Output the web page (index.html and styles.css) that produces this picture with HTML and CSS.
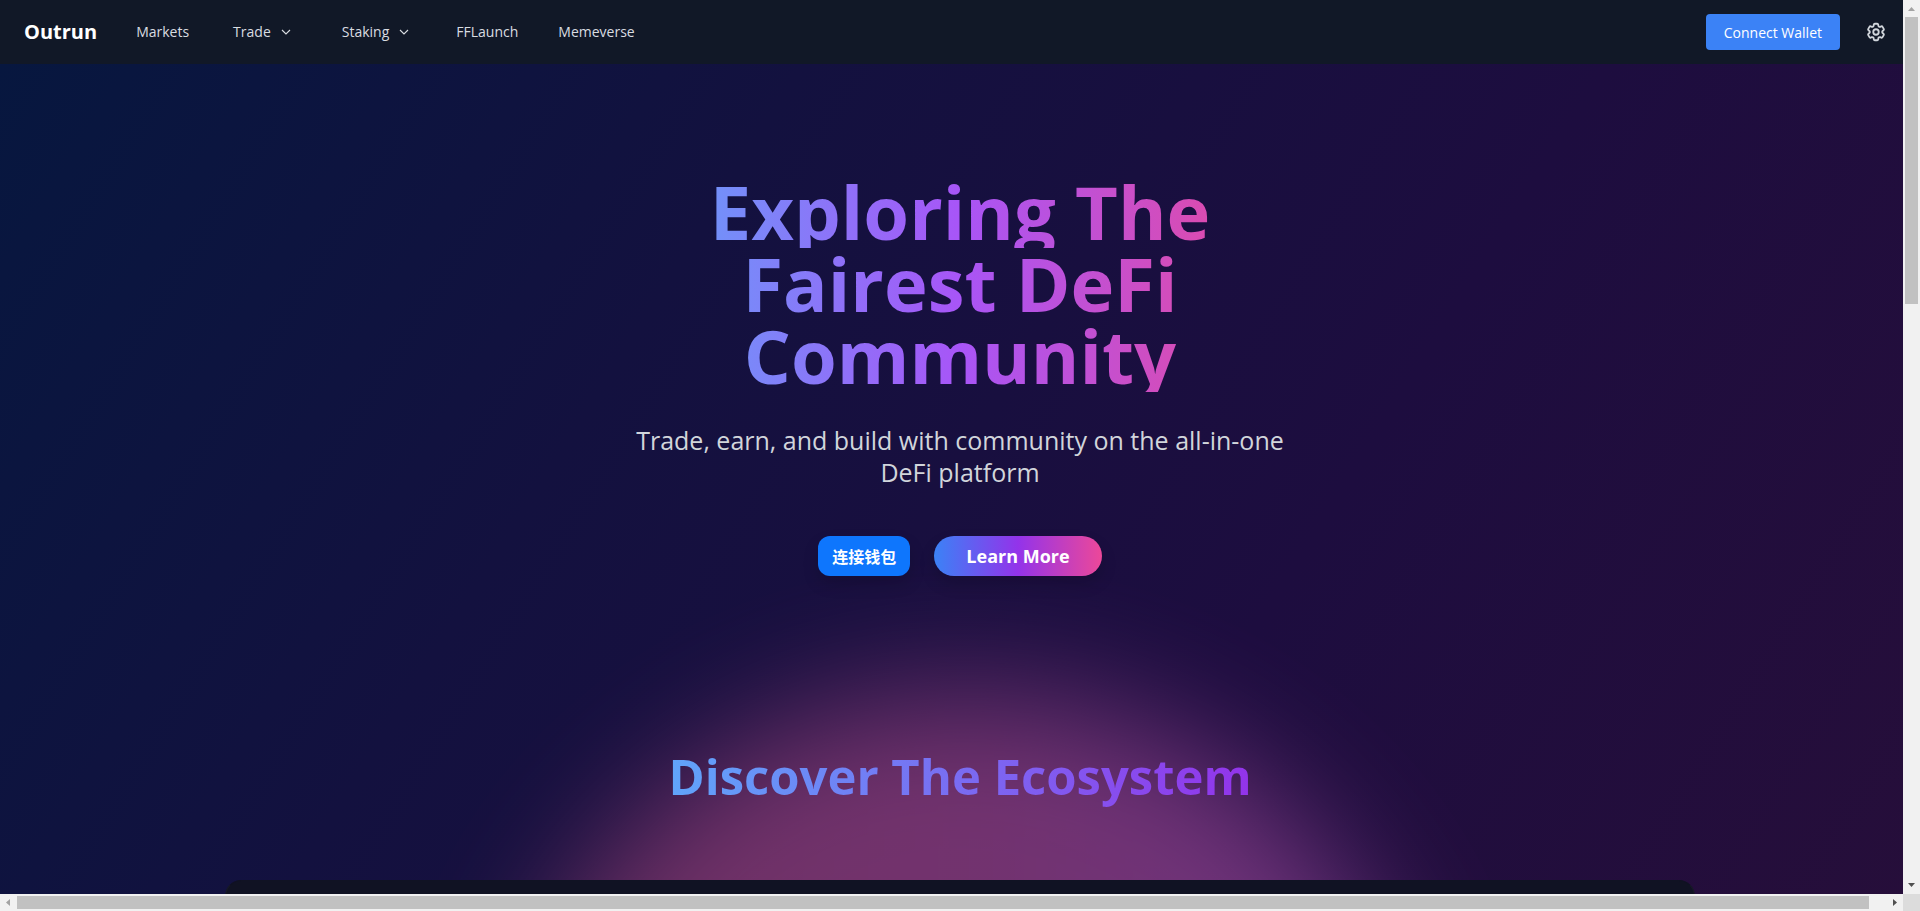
FILE: index.html
```html
<!DOCTYPE html>
<html lang="en">
<head>
<meta charset="utf-8">
<title>Outrun</title>
<link rel="stylesheet" href="styles.css">
</head>
<body>
<div class="window">
  <div class="viewport">
    <header class="header">
      <a class="brand" href="#">Outrun</a>
      <nav class="nav">
        <a class="nav-link" href="#">Markets</a>
        <button class="nav-link nav-menu" type="button">Trade
          <svg class="chevron" viewBox="0 0 24 24" aria-hidden="true"><path d="M6 9l6 6 6-6"/></svg>
        </button>
        <button class="nav-link nav-menu" type="button">Staking
          <svg class="chevron" viewBox="0 0 24 24" aria-hidden="true"><path d="M6 9l6 6 6-6"/></svg>
        </button>
        <a class="nav-link" href="#">FFLaunch</a>
        <a class="nav-link" href="#">Memeverse</a>
      </nav>
      <div class="actions">
        <button class="connect" type="button">Connect Wallet</button>
        <button class="settings" type="button" aria-label="Settings">
          <svg class="gear" viewBox="0 0 24 24" aria-hidden="true">
            <path d="M9.594 3.94c.09-.542.56-.94 1.11-.94h2.593c.55 0 1.02.398 1.11.94l.213 1.281c.063.374.313.686.645.87.074.04.147.083.22.127.325.196.72.257 1.075.124l1.217-.456a1.125 1.125 0 0 1 1.37.49l1.296 2.247a1.125 1.125 0 0 1-.26 1.431l-1.003.827c-.293.241-.438.613-.43.992a7.723 7.723 0 0 1 0 .255c-.008.378.137.75.43.991l1.004.827c.424.35.534.955.26 1.43l-1.298 2.247a1.125 1.125 0 0 1-1.369.491l-1.217-.456c-.355-.133-.75-.072-1.076.124a6.47 6.47 0 0 1-.22.128c-.331.183-.581.495-.644.869l-.213 1.281c-.09.543-.56.94-1.11.94h-2.594c-.55 0-1.019-.398-1.11-.94l-.213-1.281c-.062-.374-.312-.686-.644-.87a6.52 6.52 0 0 1-.22-.127c-.325-.196-.72-.257-1.076-.124l-1.217.456a1.125 1.125 0 0 1-1.369-.49l-1.297-2.247a1.125 1.125 0 0 1 .26-1.431l1.004-.827c.292-.24.437-.613.43-.991a6.932 6.932 0 0 1 0-.255c.007-.38-.138-.751-.43-.992l-1.004-.827a1.125 1.125 0 0 1-.26-1.43l1.297-2.247a1.125 1.125 0 0 1 1.37-.491l1.216.456c.356.133.751.072 1.076-.124.072-.044.146-.086.22-.128.332-.183.582-.495.644-.869l.214-1.28Z"/>
            <circle cx="12" cy="12" r="3"/>
          </svg>
        </button>
      </div>
    </header>
    <main class="page">
      <div class="glow"></div>
      <section class="hero">
        <h1 class="title">
          <span class="title-line">Exploring The</span>
          <span class="title-line">Fairest DeFi</span>
          <span class="title-line">Community</span>
        </h1>
        <p class="lead">Trade, earn, and build with community on the all-in-one DeFi platform</p>
        <div class="cta">
          <button class="wallet" type="button" lang="zh">连接钱包</button>
          <a class="learn" href="#">Learn More</a>
        </div>
      </section>
      <section class="ecosystem">
        <h2 class="subtitle">Discover The Ecosystem</h2>
        <div class="panel"></div>
      </section>
    </main>
  </div>
  <div class="bar bar-y">
    <svg class="arrow" viewBox="0 0 17 17" aria-hidden="true"><path class="dim" d="M5 11h7L8.500 7z"/></svg>
    <div class="track-y"><div class="thumb-y"></div></div>
    <svg class="arrow" viewBox="0 0 17 17" aria-hidden="true"><path d="M5 6h7L8.500 10z"/></svg>
  </div>
  <div class="bar bar-x">
    <svg class="arrow" viewBox="0 0 17 17" aria-hidden="true"><path class="dim" d="M10 5v7L6 8.500z"/></svg>
    <div class="track-x"><div class="thumb-x"></div></div>
    <svg class="arrow" viewBox="0 0 17 17" aria-hidden="true"><path d="M7 5v7l4-3.500z"/></svg>
  </div>
  <div class="corner"></div>
</div>
</body>
</html>
```
FILE: styles.css
```css
* { box-sizing: border-box; }
body {
  margin: 0;
  font-family: "Open Sans", "Noto Sans", "Noto Sans CJK SC", sans-serif;
  color: #fff;
}
button {
  font: inherit;
  color: inherit;
  border: 0;
  padding: 0;
  background: none;
  cursor: pointer;
}
a { color: inherit; text-decoration: none; }

.window {
  display: grid;
  grid-template-columns: minmax(0, 1fr) 17px;
  grid-template-rows: minmax(0, 1fr) 17px;
  height: 100vh;
}
.viewport {
  display: flex;
  flex-direction: column;
  overflow: hidden;
}

.header {
  display: flex;
  align-items: center;
  flex: none;
  height: 64px;
  padding: 0 16px 0 24px;
  background: #111827;
}
.brand { font-size: 20px; font-weight: 700; line-height: 28px; }
.nav {
  display: flex;
  align-items: center;
  gap: 40px;
  margin-left: 39px;
  font-size: 14px;
  line-height: 20px;
  color: #d9dce1;
}
.nav-menu { display: flex; align-items: center; gap: 7px; padding: 0 4px; }
.chevron {
  width: 16px;
  height: 16px;
  fill: none;
  stroke: currentColor;
  stroke-width: 1.7;
}
.actions { display: flex; align-items: center; gap: 25px; margin-left: auto; }
.connect {
  height: 36px;
  padding: 0 18px;
  border-radius: 4px;
  background: #3b82f6;
  font-size: 14px;
}
.settings { display: flex; color: #d1d5db; }
.gear {
  width: 22px;
  height: 22px;
  fill: none;
  stroke: currentColor;
  stroke-width: 2;
}

.page {
  position: relative;
  flex: 1;
  width: 100vw;
  overflow: hidden;
  background: linear-gradient(122deg, #07173f 0%, #13113f 33%, #1d0d3f 66%, #260e3a 100%);
}
.glow {
  position: absolute;
  top: 628px;
  left: 50%;
  width: 900px;
  height: 840px;
  margin-left: -446px;
  border-radius: 50%;
  background: linear-gradient(90deg, #d9588c, #d95fa6 50%, #cc63d4);
  opacity: 0.46;
  filter: blur(64px);
}
.hero {
  position: relative;
  display: flex;
  flex-direction: column;
  align-items: center;
  padding-top: 112px;
  text-align: center;
}
.title {
  width: 100%;
  max-width: 672px;
  margin: 0;
  font-size: 74px;
  font-weight: 700;
  line-height: 72px;
}
.title-line {
  display: block;
  background: linear-gradient(90deg, #60a5fa, #a855f7 50%, #ec4899);
  -webkit-background-clip: text;
  background-clip: text;
  color: transparent;
}
.lead {
  max-width: 672px;
  margin: 32px 0 0;
  font-size: 25px;
  line-height: 32px;
  color: #d1d5db;
}
.cta { display: flex; gap: 24px; margin-top: 48px; }
.wallet, .learn {
  display: flex;
  align-items: center;
  height: 40px;
  font-weight: 700;
  box-shadow: 0 8px 16px rgba(0, 0, 0, 0.15);
}
.wallet {
  padding: 0 14px;
  border-radius: 12px;
  background: #0e76fd;
  font-size: 16px;
}
.learn {
  padding: 0 32px;
  border-radius: 20px;
  background: linear-gradient(90deg, #3b82f6, #9333ea 50%, #ec4899);
  font-size: 18px;
}
.ecosystem {
  position: relative;
  display: flex;
  flex-direction: column;
  align-items: center;
  margin-top: 168px;
}
.subtitle {
  margin: 0 0 72px;
  background: linear-gradient(90deg, #60a5fa, #9333ea);
  -webkit-background-clip: text;
  background-clip: text;
  color: transparent;
  font-size: 49px;
  font-weight: 700;
  line-height: 64px;
}
.panel {
  width: 100%;
  max-width: 1470px;
  height: 400px;
  border: 1px solid #171a26;
  border-top-color: #101223;
  border-radius: 16px;
  background: #101223;
}

.bar { display: flex; background: #f1f1f1; }
.bar-y { flex-direction: column; }
.arrow { flex: none; width: 17px; height: 17px; fill: #505050; }
.dim { fill: #a3a3a3; }
.track-y, .track-x { flex: 1; }
.track-y { padding: 0 2px; }
.track-x { padding: 2px 0; }
.thumb-y, .thumb-x { background: #c1c1c1; }
.thumb-y { height: 33.37%; }
.thumb-x { width: 99.1%; height: 100%; }
.corner { background: #dcdcdc; }
```
